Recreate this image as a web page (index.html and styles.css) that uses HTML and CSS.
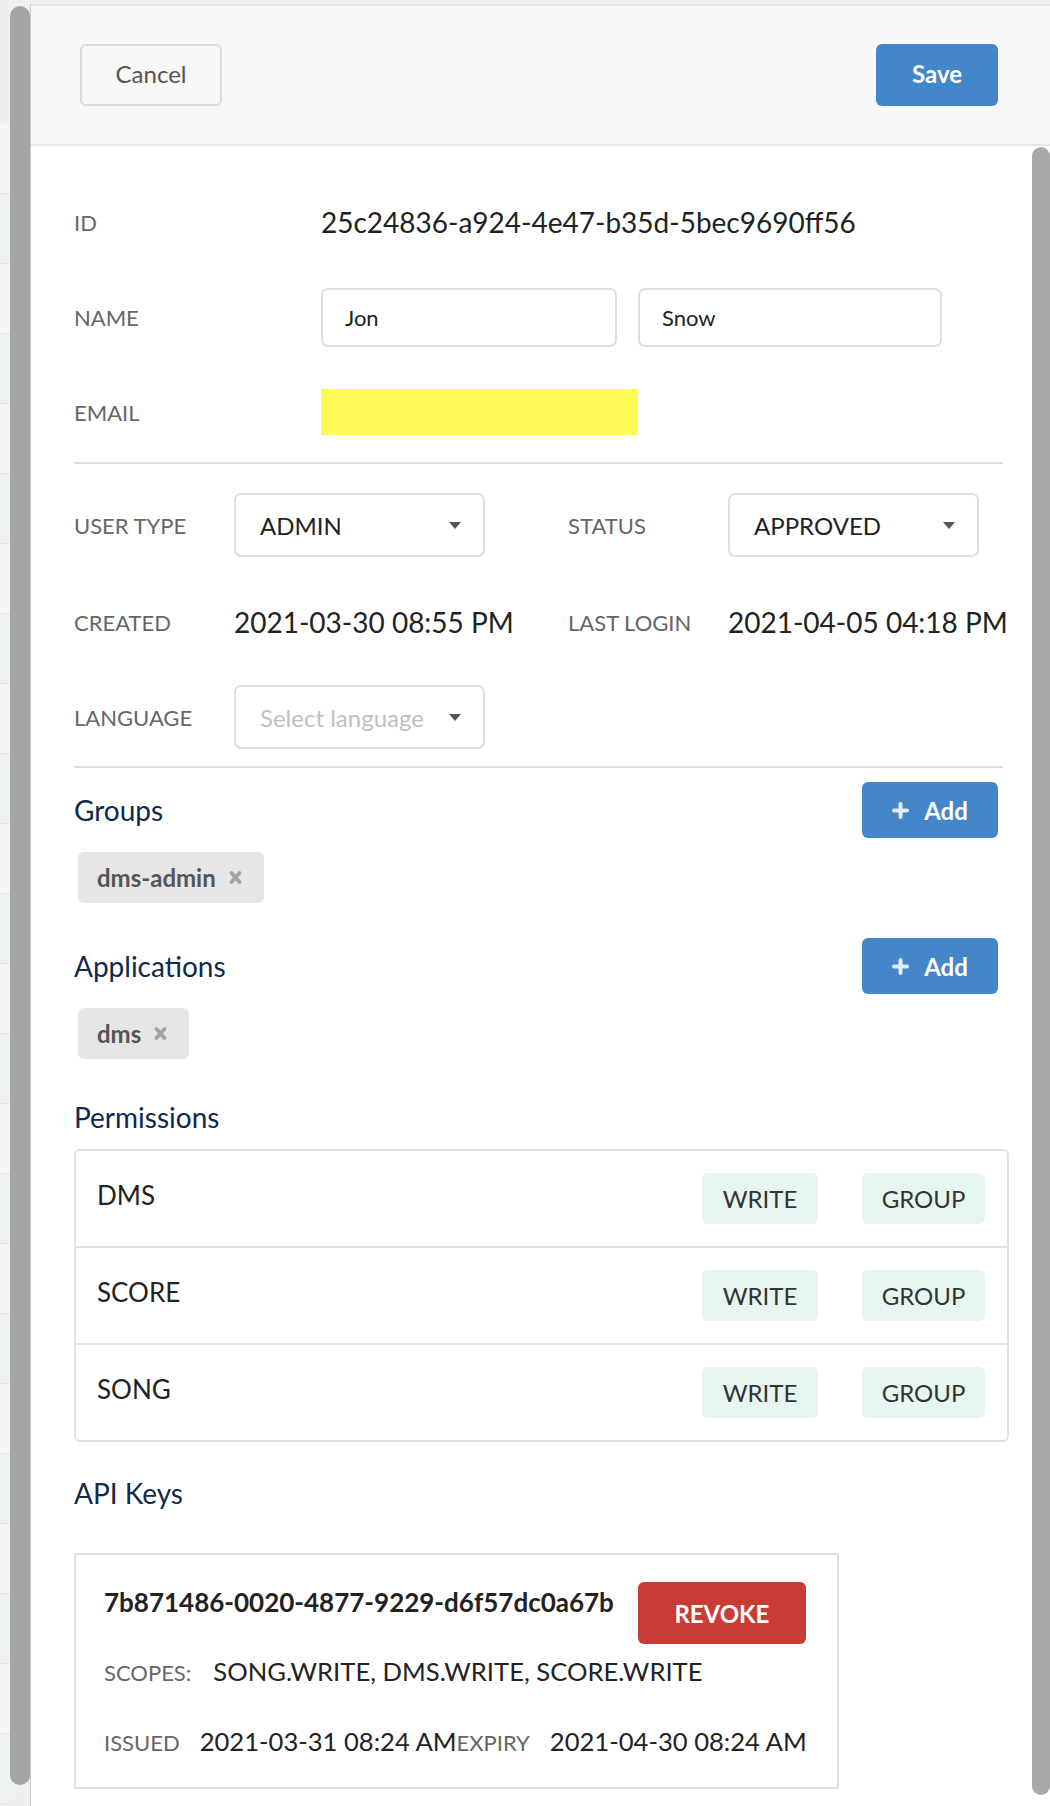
FILE: index.html
```html
<!DOCTYPE html>
<html lang="en">
<head>
<meta charset="utf-8">
<title>Edit user</title>
<link rel="stylesheet" href="styles.css">
</head>
<body>
<div class="page">
  <div class="backdrop">
    <div class="bd-row bd-a"></div>
    <div class="bd-row bd-b"></div>
    <div class="bd-row bd-a"></div>
    <div class="bd-row bd-b"></div>
    <div class="bd-row bd-a"></div>
    <div class="bd-row bd-b"></div>
    <div class="bd-row bd-a"></div>
    <div class="bd-row bd-b"></div>
    <div class="bd-row bd-a"></div>
    <div class="bd-row bd-b"></div>
    <div class="bd-row bd-a"></div>
    <div class="bd-row bd-b"></div>
    <div class="bd-row bd-a"></div>
    <div class="bd-row bd-b"></div>
    <div class="bd-row bd-a"></div>
    <div class="bd-row bd-b"></div>
    <div class="bd-row bd-a"></div>
    <div class="bd-row bd-b"></div>
    <div class="bd-row bd-a"></div>
    <div class="bd-row bd-b"></div>
    <div class="bd-row bd-a"></div>
    <div class="bd-row bd-b"></div>
    <div class="bd-row bd-a"></div>
    <div class="bd-row bd-b"></div>
  </div>
  <div class="outer-scroll"><div class="outer-thumb"></div></div>
  <div class="drawer">
    <header class="drawer-header">
      <button class="btn btn-cancel">Cancel</button>
      <button class="btn btn-save">Save</button>
    </header>
    <div class="drawer-main">
      <div class="drawer-body">
        <div class="row-a">
          <div class="label label-a">ID</div>
          <div class="value-lg">25c24836-a924-4e47-b35d-5bec9690ff56</div>
        </div>
        <div class="row-a">
          <div class="label label-a">NAME</div>
          <div class="input input-first">Jon</div>
          <div class="input input-last">Snow</div>
        </div>
        <div class="row-a">
          <div class="label label-a">EMAIL</div>
          <div class="email-redact"></div>
        </div>

        <div class="divider divider-1"></div>

        <div class="grid-b grid-first">
          <div class="label">USER TYPE</div>
          <div class="cell"><div class="select"><span>ADMIN</span><span class="caret"></span></div></div>
          <div class="label">STATUS</div>
          <div class="cell"><div class="select"><span>APPROVED</span><span class="caret"></span></div></div>
        </div>
        <div class="grid-b grid-mid">
          <div class="label">CREATED</div>
          <div class="value-lg">2021-03-30 08:55 PM</div>
          <div class="label">LAST LOGIN</div>
          <div class="value-lg">2021-04-05 04:18 PM</div>
        </div>
        <div class="grid-b grid-last">
          <div class="label">LANGUAGE</div>
          <div class="cell"><div class="select"><span class="placeholder">Select language</span><span class="caret"></span></div></div>
        </div>

        <div class="divider divider-2"></div>

        <div class="sec-head sec-groups">
          <h2 class="heading">Groups</h2>
          <button class="btn btn-add">
            <svg class="plus" width="17" height="17" viewBox="0 0 17 17"><path d="M8.5 2v13M2 8.5h13" stroke="currentColor" stroke-width="4" stroke-linecap="round"/></svg>
            <span>Add</span>
          </button>
        </div>
        <div class="chips">
          <span class="chip">dms-admin<svg class="chip-x" width="15" height="15" viewBox="0 0 15 15"><path d="M3.5 3l8 9M11.5 3l-8 9" stroke="currentColor" stroke-width="3.8" stroke-linecap="round"/></svg></span>
        </div>

        <div class="sec-head sec-apps">
          <h2 class="heading">Applications</h2>
          <button class="btn btn-add">
            <svg class="plus" width="17" height="17" viewBox="0 0 17 17"><path d="M8.5 2v13M2 8.5h13" stroke="currentColor" stroke-width="4" stroke-linecap="round"/></svg>
            <span>Add</span>
          </button>
        </div>
        <div class="chips">
          <span class="chip">dms<svg class="chip-x" width="15" height="15" viewBox="0 0 15 15"><path d="M3.5 3l8 9M11.5 3l-8 9" stroke="currentColor" stroke-width="3.8" stroke-linecap="round"/></svg></span>
        </div>

        <h2 class="heading heading-block heading-perm">Permissions</h2>
        <div class="perm-table">
          <div class="perm-row">
            <div class="perm-name">DMS</div>
            <div class="perm-badges"><span class="badge badge-write">WRITE</span><span class="badge badge-group">GROUP</span></div>
          </div>
          <div class="perm-row">
            <div class="perm-name">SCORE</div>
            <div class="perm-badges"><span class="badge badge-write">WRITE</span><span class="badge badge-group">GROUP</span></div>
          </div>
          <div class="perm-row">
            <div class="perm-name">SONG</div>
            <div class="perm-badges"><span class="badge badge-write">WRITE</span><span class="badge badge-group">GROUP</span></div>
          </div>
        </div>

        <h2 class="heading heading-block heading-api">API Keys</h2>
        <div class="key-card">
          <div class="key-row">
            <div class="key-id">7b871486-0020-4877-9229-d6f57dc0a67b</div>
            <button class="btn btn-revoke">REVOKE</button>
          </div>
          <div class="meta-row meta-scopes">
            <span class="meta-label">SCOPES:</span>
            <span class="meta-value">SONG.WRITE, DMS.WRITE, SCORE.WRITE</span>
          </div>
          <div class="meta-row meta-dates">
            <span class="meta-label">ISSUED</span>
            <span class="meta-value">2021-03-31 08:24 AM</span><span class="meta-label">EXPIRY</span>
            <span class="meta-value">2021-04-30 08:24 AM</span>
          </div>
        </div>
      </div>
      <div class="inner-scroll"><div class="inner-thumb"></div></div>
    </div>
  </div>
</div>
</body>
</html>
```

FILE: styles.css
```css
* { box-sizing: border-box; }

html, body {
  margin: 0;
  padding: 0;
}

body {
  font-family: "Lato", "Open Sans", sans-serif;
  color: #222;
  background: #efefef;
}

.page {
  display: flex;
  width: 1050px;
  height: 1806px;
  padding-top: 4px;
  background: #efefef;
  overflow: hidden;
}

.backdrop {
  width: 10px;
  display: flex;
  flex-direction: column;
  padding-top: 120px;
}

.bd-row {
  height: 70px;
  border-bottom: 1px solid #e4e4e4;
}

.bd-a { background: #f5f5f5; }
.bd-b { background: #eef1f2; }

.outer-scroll {
  width: 21px;
  padding-top: 2px;
  border-right: 1px solid #c8c8c8;
}

.outer-thumb {
  width: 20px;
  height: 1779px;
  background: #a5a5a5;
  border-radius: 10px;
}

.drawer {
  flex: 1;
  display: flex;
  flex-direction: column;
  background: #fff;
  border-top: 2px solid #e4e4e4;
}

.drawer-header {
  height: 140px;
  background: #f8f8f8;
  border-bottom: 2px solid #e6e6e6;
  display: flex;
  justify-content: space-between;
  align-items: flex-start;
  padding: 38px 52px 0 49px;
}

.btn {
  font-family: "Lato", "Open Sans", sans-serif;
  border: none;
  margin: 0;
  padding: 0;
  cursor: pointer;
  display: flex;
  align-items: center;
  justify-content: center;
  border-radius: 6px;
}

.btn-cancel {
  width: 142px;
  height: 62px;
  background: transparent;
  border: 2px solid #dcdcdc;
  color: #555;
  font-size: 24px;
  padding-bottom: 3px;
}

.btn-save {
  width: 122px;
  height: 62px;
  background: #4386c9;
  color: #fff;
  font-size: 24px;
  font-weight: 700;
  padding-bottom: 3px;
}

.drawer-main {
  flex: 1;
  display: flex;
}

.drawer-body {
  flex: 1;
  padding: 44px 23px 0 43px;
}

.inner-scroll {
  width: 18px;
  padding-top: 1px;
}

.inner-thumb {
  width: 18px;
  height: 1648px;
  background: #a9a9a9;
  border-radius: 9px;
}

.label {
  font-size: 22px;
  color: #666;
}

.value-lg {
  font-size: 28px;
  color: #222;
  white-space: nowrap;
}

.row-a {
  display: flex;
  align-items: center;
  height: 64px;
}

.row-a + .row-a { margin-top: 31px; }

.label-a { width: 247px; }

.input {
  height: 59px;
  border: 2px solid #ddd;
  border-radius: 7px;
  padding-left: 22px;
  font-size: 22px;
  color: #222;
  display: flex;
  align-items: center;
}

.input-first { width: 296px; }
.input-last { width: 304px; margin-left: 21px; }

.email-redact {
  width: 317px;
  height: 46px;
  background: #fffa55;
}

.divider {
  border-top: 2px solid #dedede;
  margin-right: 6px;
}

.divider-1 { margin-top: 18px; }
.divider-2 { margin-top: 17px; }

.grid-b {
  display: grid;
  grid-template-columns: 160px 334px 160px 1fr;
  align-items: center;
  height: 64px;
}

.grid-first { margin-top: 29px; }
.grid-mid { margin-top: 33px; }
.grid-last { margin-top: 31px; }

.select {
  width: 251px;
  height: 64px;
  border: 2px solid #ddd;
  border-radius: 7px;
  padding: 0 22px 0 24px;
  font-size: 24px;
  color: #222;
  display: flex;
  align-items: center;
  justify-content: space-between;
}

.placeholder { color: #bfbfbf; }

.caret {
  width: 0;
  height: 0;
  border-left: 6.5px solid transparent;
  border-right: 6.5px solid transparent;
  border-top: 7px solid #555;
}

.sec-head {
  display: flex;
  justify-content: space-between;
  align-items: center;
  height: 56px;
  margin-right: 11px;
}

.sec-groups { margin-top: 14px; }
.sec-apps { margin-top: 35px; }

.heading {
  margin: 0;
  font-size: 28px;
  font-weight: 400;
  color: #10294c;
  line-height: 34px;
}

.btn-add {
  width: 136px;
  height: 56px;
  background: #4386c9;
  color: #fff;
  font-size: 24px;
  font-weight: 700;
  gap: 15px;
}

.plus { color: #e3edf8; display: block; }

.chips {
  margin-top: 14px;
  display: flex;
}

.chip {
  display: inline-flex;
  align-items: center;
  height: 51px;
  margin-left: 4px;
  padding: 0 21px 0 19px;
  background: #e6e6e6;
  border-radius: 6px;
  font-size: 24px;
  font-weight: 700;
  color: #555;
}

.chip-x {
  color: #a3a3a3;
  margin-left: 12px;
  display: block;
}

.heading-block { display: block; }
.heading-perm { margin-top: 41px; }
.heading-api { margin-top: 34px; }

.perm-table {
  margin-top: 15px;
  border: 2px solid #e2e2e2;
  border-radius: 6px;
}

.perm-row {
  height: 95px;
  display: flex;
  align-items: center;
  justify-content: space-between;
  padding: 0 22px 0 21px;
}

.perm-row + .perm-row { border-top: 2px solid #e2e2e2; height: 97px; }

.perm-name {
  font-size: 26px;
  color: #222;
  margin-bottom: 8px;
}

.perm-badges {
  display: flex;
  gap: 44px;
}

.badge {
  height: 51px;
  display: flex;
  align-items: center;
  justify-content: center;
  background: #e7f5f1;
  border-radius: 6px;
  font-size: 24px;
  color: #333;
}

.badge-write { width: 116px; }
.badge-group { width: 123px; }

.key-card {
  margin-top: 43px;
  width: 765px;
  border: 2px solid #e0e0e0;
  padding: 27px 28px 29px;
}

.key-row {
  display: flex;
  align-items: flex-start;
  gap: 24px;
}

.key-id {
  font-size: 26px;
  font-weight: 700;
  color: #222;
  margin-top: 5px;
  line-height: 31px;
  white-space: nowrap;
}

.btn-revoke {
  width: 168px;
  height: 62px;
  background: #c93b35;
  color: #fff;
  font-size: 24px;
  font-weight: 700;
}

.meta-row {
  display: flex;
  align-items: baseline;
  line-height: 31px;
  white-space: nowrap;
}

.meta-scopes { margin-top: 12px; }
.meta-dates { margin-top: 38px; }

.meta-label {
  font-size: 22px;
  color: #666;
}

.meta-scopes .meta-label { margin-right: 22px; }
.meta-dates .meta-label { margin-right: 20px; }

.meta-value {
  font-size: 25.6px;
  color: #222;
}
```
